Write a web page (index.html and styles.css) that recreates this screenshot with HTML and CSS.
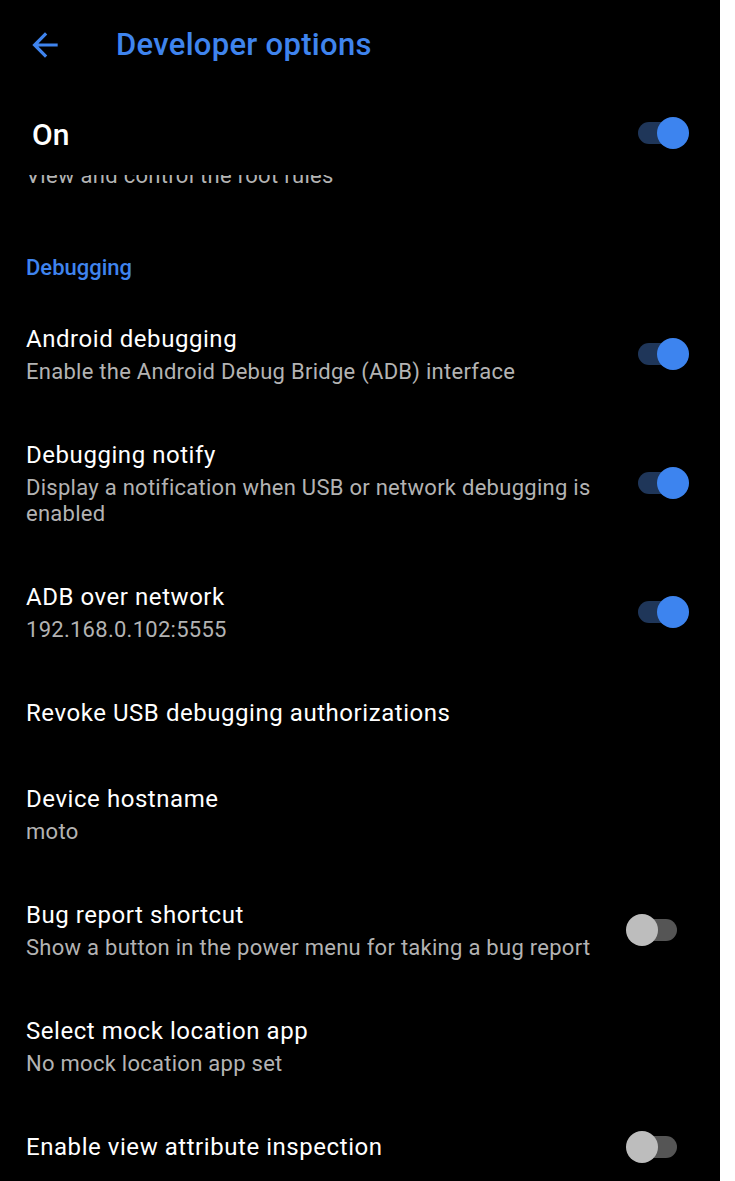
FILE: index.html
```html
<!DOCTYPE html>
<html lang="en">
<head>
<meta charset="utf-8">
<title>Developer options</title>
<link rel="stylesheet" href="styles.css">
</head>
<body>
<div class="screen">
  <header class="appbar">
    <svg class="back" viewBox="0 0 24 24" aria-hidden="true"><path d="M20 11H7.83l5.59-5.59L12 4l-8 8 8 8 1.41-1.41L7.83 13H20v-2z"/></svg>
    <h1 class="title">Developer options</h1>
  </header>
  <div class="switchbar">
    <span class="switchbar-label">On</span>
    <span class="toggle on"><span class="track"></span><span class="thumb"></span></span>
  </div>
  <div class="list">
    <div class="clip"><p class="clip-text">View and control the root rules</p></div>
    <div class="category">Debugging</div>
    <div class="row">
      <div class="text"><div class="row-title">Android debugging</div><div class="row-sub">Enable the Android Debug Bridge (ADB) interface</div></div>
      <span class="toggle on"><span class="track"></span><span class="thumb"></span></span>
    </div>
    <div class="row">
      <div class="text"><div class="row-title">Debugging notify</div><div class="row-sub">Display a notification when USB or network debugging is enabled</div></div>
      <span class="toggle on"><span class="track"></span><span class="thumb"></span></span>
    </div>
    <div class="row">
      <div class="text"><div class="row-title">ADB over network</div><div class="row-sub">192.168.0.102:5555</div></div>
      <span class="toggle on"><span class="track"></span><span class="thumb"></span></span>
    </div>
    <div class="row">
      <div class="text"><div class="row-title">Revoke USB debugging authorizations</div></div>
    </div>
    <div class="row">
      <div class="text"><div class="row-title">Device hostname</div><div class="row-sub">moto</div></div>
    </div>
    <div class="row">
      <div class="text"><div class="row-title">Bug report shortcut</div><div class="row-sub">Show a button in the power menu for taking a bug report</div></div>
      <span class="toggle off"><span class="track"></span><span class="thumb"></span></span>
    </div>
    <div class="row">
      <div class="text"><div class="row-title">Select mock location app</div><div class="row-sub">No mock location app set</div></div>
    </div>
    <div class="row">
      <div class="text"><div class="row-title">Enable view attribute inspection</div></div>
      <span class="toggle off"><span class="track"></span><span class="thumb"></span></span>
    </div>
  </div>
</div>
</body>
</html>
```

FILE: styles.css
```css
* { box-sizing: border-box; }
html, body { margin: 0; padding: 0; }
body {
  background: #ffffff;
  font-family: Roboto, "Noto Sans", sans-serif;
  height: 1181px;
  overflow: hidden;
}
.screen {
  width: 720px;
  height: 1181px;
  background: #000000;
  overflow: hidden;
  color: #ffffff;
}
.appbar {
  height: 90px;
  display: flex;
  align-items: center;
}
.back {
  width: 38px;
  height: 38px;
  margin-left: 26px;
  fill: #3f84ee;
  flex: none;
}
.title {
  margin: 0 0 0 52px;
  font-size: 31px;
  line-height: 40px;
  font-weight: 500;
  letter-spacing: 0.3px;
  color: #3f84ee;
}
.switchbar {
  height: 85px;
  display: flex;
  align-items: center;
  justify-content: space-between;
  padding: 0 31px 0 32px;
}
.switchbar-label {
  margin-top: 5px;
  font-size: 30px;
  font-weight: 500;
  line-height: 36px;
}
.clip {
  height: 14px;
  overflow: hidden;
  padding-left: 26px;
  margin-bottom: 28px;
}
.clip-text {
  margin: -12px 0 0 0;
  font-size: 22px;
  line-height: 26px;
  letter-spacing: 0.3px;
  color: #b3b3b3;
}
.category {
  padding: 35px 26px 12px;
  font-size: 22px;
  line-height: 32px;
  font-weight: 500;
  color: #3f84ee;
}
.row {
  display: flex;
  align-items: center;
  padding: 27px 31px 27px 26px;
}
.text {
  flex: 1;
  min-width: 0;
}
.row-title {
  font-size: 24px;
  line-height: 32px;
  letter-spacing: 0.55px;
  color: #ffffff;
}
.row-sub {
  margin-top: 4px;
  font-size: 22px;
  line-height: 26px;
  letter-spacing: 0.27px;
  color: #b3b3b3;
}
.toggle {
  position: relative;
  flex: none;
  width: 54px;
  height: 32px;
  margin-left: 25px;
}
.track {
  position: absolute;
  left: 3px;
  top: 5px;
  width: 48px;
  height: 22px;
  border-radius: 11px;
}
.thumb {
  position: absolute;
  top: 0;
  width: 32px;
  height: 32px;
  border-radius: 50%;
}
.toggle.on .track { background: #1f3659; }
.toggle.on .thumb { right: 0; background: #3d84ef; }
.toggle.off { margin-right: 9px; }
.toggle.off .track { background: #555555; }
.toggle.off .thumb { left: 0; background: #bdbdbd; }
```
